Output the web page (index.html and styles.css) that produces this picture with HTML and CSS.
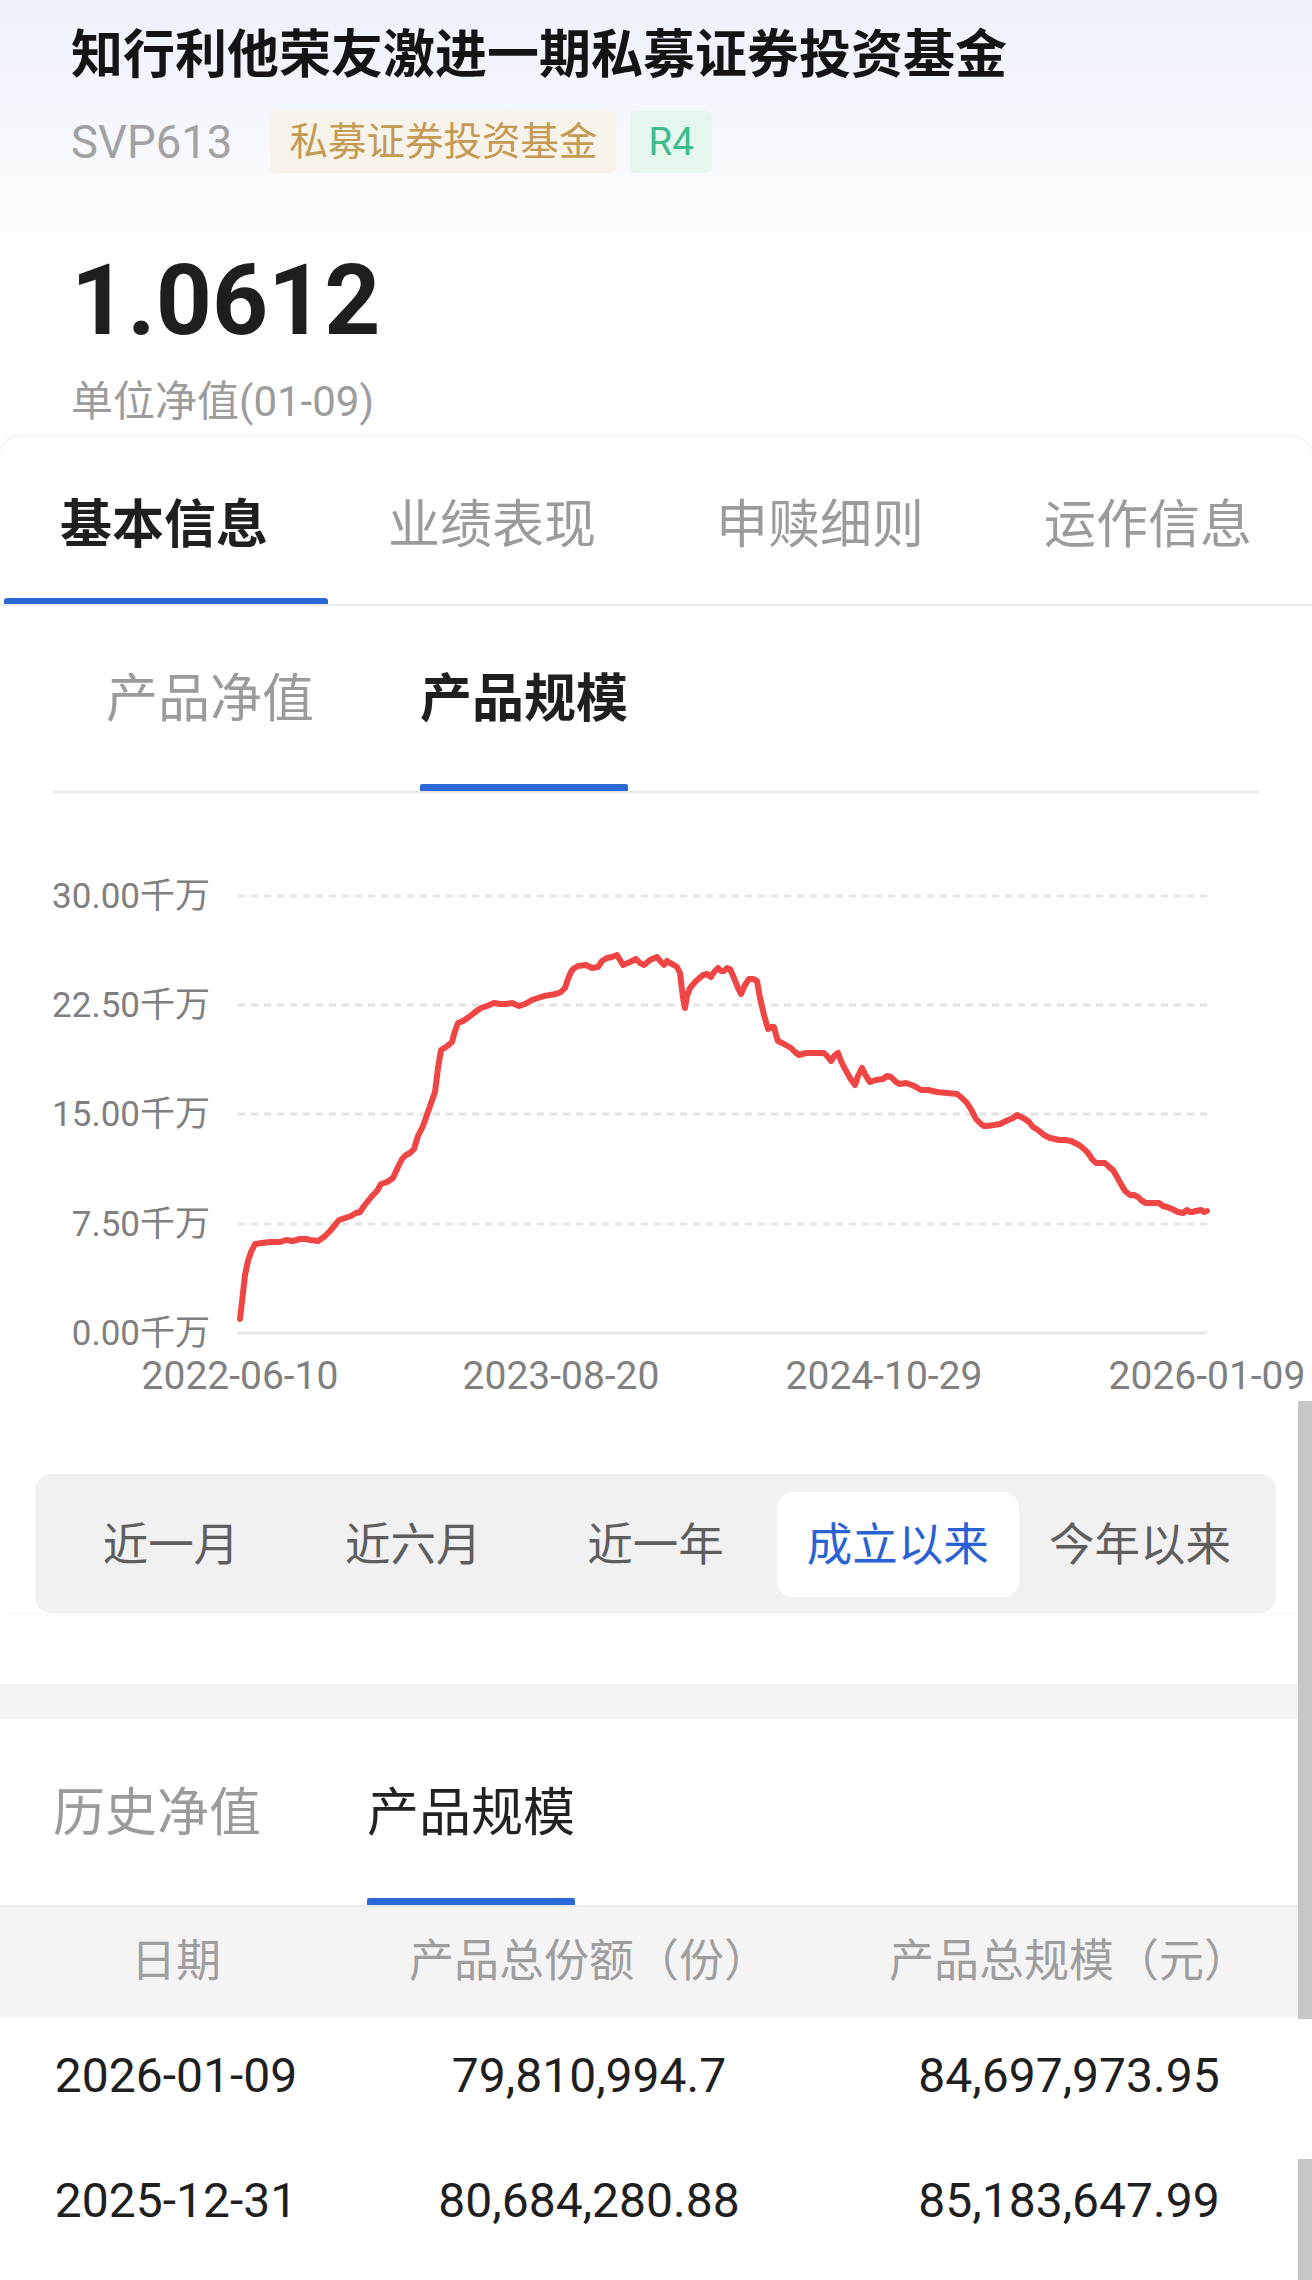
FILE: index.html
```html
<!DOCTYPE html>
<html lang="zh-CN">
<head>
    <meta charset="UTF-8">
    <meta name="viewport" content="width=device-width, initial-scale=1.0">
    <title>知行利他荣友激进一期私募证券投资基金</title>
    <link rel="stylesheet" href="styles.css">
</head>
<body>

    <header class="fund-head">
        <h1 class="fund-name">知行利他荣友激进一期私募证券投资基金</h1>
        <div class="fund-meta">
            <span class="fund-code">SVP613</span>
            <span class="tag tag-type">私募证券投资基金</span>
            <span class="tag tag-risk">R4</span>
        </div>
        <div class="nav-value">1.0612</div>
        <div class="nav-label">单位净值(01-09)</div>
    </header>

    <section class="panel">
        <nav class="main-tabs">
            <div class="main-tab active">基本信息</div>
            <div class="main-tab">业绩表现</div>
            <div class="main-tab">申赎细则</div>
            <div class="main-tab">运作信息</div>
        </nav>

        <div class="sub-tabs">
            <div class="sub-tab">产品净值</div>
            <div class="sub-tab active">产品规模</div>
        </div>

        <!-- scale chart -->
        <div class="chart">
            <svg width="1312" height="610">
                <g class="grid">
                    <line x1="238" y1="103" x2="1207" y2="103"/>
                    <line x1="238" y1="212" x2="1207" y2="212"/>
                    <line x1="238" y1="321" x2="1207" y2="321"/>
                    <line x1="238" y1="431" x2="1207" y2="431"/>
                </g>
                <line class="axis" x1="238" y1="540" x2="1207" y2="540"/>
                <g class="y-labels">
                    <text x="210" y="103">30.00千万</text>
                    <text x="210" y="212">22.50千万</text>
                    <text x="210" y="321">15.00千万</text>
                    <text x="210" y="431">7.50千万</text>
                    <text x="210" y="540">0.00千万</text>
                </g>
                <g class="x-labels">
                    <text x="240" y="583">2022-06-10</text>
                    <text x="561" y="583">2023-08-20</text>
                    <text x="884" y="583">2024-10-29</text>
                    <text x="1207" y="583">2026-01-09</text>
                </g>
                <polyline class="line" points="240,526 243,500 245,482 248,468 251,459 255,451 262,450 270,449 280,449 286,447 293,448 300,446 306,446 310,447 318,448 324,444 330,438 335,432 339,427 345,425 351,423 356,420 360,419 364,413 368,408 373,402 377,398 381,391 387,389 393,385 398,374 402,366 406,362 410,360 414,356 418,343 423,333 429,316 435,299 438,275 441,257 446,254 452,249 455,238 458,230 463,228 466,226 469,224 474,220 478,217 481,215 487,213 494,210 500,211 506,211 512,210 519,213 525,211 532,207 538,205 544,203 550,202 556,201 561,199 565,195 568,186 571,179 573,176 578,173 586,172 592,175 598,174 602,168 607,165 612,164 617,162 620,167 623,172 630,169 636,166 640,170 644,172 650,167 657,164 661,169 664,172 667,168 670,170 674,172 677,174 680,180 683,205 685,215 687,203 690,195 696,188 703,182 707,181 711,184 714,179 718,175 721,178 724,178 727,175 730,176 734,185 738,195 741,201 745,192 749,186 753,186 757,188 760,205 764,222 768,236 771,234 774,234 776,242 778,248 784,251 791,255 795,259 799,262 806,260 812,260 818,260 824,260 828,264 831,268 835,262 838,260 841,268 845,276 850,285 855,292 858,283 862,275 866,283 870,289 876,287 883,286 887,283 891,284 896,289 900,291 906,290 912,292 916,294 921,297 928,297 937,299 947,300 957,301 962,305 967,310 972,318 976,326 981,331 984,333 987,333 994,332 1000,331 1006,328 1013,325 1017,322 1021,324 1025,326 1029,329 1033,334 1038,337 1044,342 1050,345 1055,346 1059,347 1065,347 1071,348 1075,350 1079,352 1084,356 1088,360 1092,366 1096,370 1100,370 1105,370 1109,374 1113,377 1117,384 1121,391 1125,398 1130,402 1134,402 1138,404 1142,408 1146,410 1152,410 1159,410 1163,413 1167,414 1172,416 1178,419 1183,420 1187,417 1190,419 1192,419 1196,418 1201,417 1204,419 1207,418"/>
            </svg>
        </div>

        <div class="range">
            <div class="range-item">近一月</div>
            <div class="range-item">近六月</div>
            <div class="range-item">近一年</div>
            <div class="range-item active">成立以来</div>
            <div class="range-item">今年以来</div>
        </div>
    </section>

    <div class="band"></div>

    <section class="history">
        <div class="hist-tabs">
            <div class="hist-tab">历史净值</div>
            <div class="hist-tab active">产品规模</div>
        </div>

        <div class="table-head">
            <div>日期</div>
            <div>产品总份额（份）</div>
            <div>产品总规模（元）</div>
        </div>
        <div class="table-row">
            <div>2026-01-09</div>
            <div>79,810,994.7</div>
            <div>84,697,973.95</div>
        </div>
        <div class="table-row">
            <div>2025-12-31</div>
            <div>80,684,280.88</div>
            <div>85,183,647.99</div>
        </div>
    </section>

    <!-- scroll indicators drawn over the right edge -->
    <div class="thumb thumb-top"></div>
    <div class="thumb thumb-bottom"></div>

</body>
</html>
```

FILE: styles.css
```css
body {
    margin: 0;
    position: relative;
    width: 1312px;
    height: 2280px;
    overflow: hidden;
    background: #fff;
    font-family: Roboto, "Noto Sans CJK SC", sans-serif;
    color: #1f1f1f;
}

/* Header */
.fund-head {
    padding: 26px 0 11px 71px;
    background: linear-gradient(180deg, #edf1fa 0px, #f7f9fd 160px, #ffffff 300px);
}

.fund-name {
    margin: 0;
    font-size: 52px;
    line-height: 60px;
    font-weight: 700;
    color: #141414;
}

.fund-meta {
    display: flex;
    align-items: center;
    height: 62px;
    margin-top: 25px;
}

.fund-code {
    font-size: 45.5px;
    color: #a2a2a2;
    margin-right: 38px;
}

.tag {
    height: 62px;
    line-height: 62px;
    font-size: 38.5px;
    border-radius: 6px;
}

.tag-type {
    padding: 0 19px;
    background: #f8f3ea;
    color: #c49a55;
}

.tag-risk {
    margin-left: 14px;
    padding: 0 18px;
    background: #e5f6ef;
    color: #3dbd8c;
}

.nav-value {
    margin-top: 79px;
    font-size: 98px;
    line-height: 98px;
    font-weight: 700;
    color: #1e1e1e;
}

.nav-label {
    margin-top: 28px;
    font-size: 42px;
    line-height: 48px;
    color: #9c9c9c;
}

/* Panel with main tabs */
.panel {
    background: #fff;
    border-radius: 22px 22px 0 0;
    box-shadow: 0 -1px 8px rgba(0, 0, 0, 0.06);
}

.main-tabs {
    display: grid;
    grid-template-columns: repeat(4, 1fr);
    height: 167px;
    border-bottom: 2px solid #ebebeb;
}

.main-tab {
    position: relative;
    display: flex;
    align-items: center;
    justify-content: center;
    font-size: 52px;
    color: #9b9b9b;
}

.main-tab.active {
    color: #1f1f1f;
    font-weight: 700;
}

.main-tab.active::after {
    content: "";
    position: absolute;
    left: 4px;
    right: 0;
    bottom: 0;
    height: 6px;
    border-radius: 3px 3px 0 0;
    background: #2d68d8;
}

/* Sub tabs */
.sub-tabs {
    display: flex;
    height: 185px;
    margin: 0 53px;
    border-bottom: 2px solid #e8e8e8;
}

.sub-tab {
    position: relative;
    display: flex;
    align-items: center;
    padding: 0 53px 8px;
    font-size: 52px;
    color: #9b9b9b;
}

.sub-tab.active {
    color: #1f1f1f;
    font-weight: 700;
}

.sub-tab.active::after {
    content: "";
    position: absolute;
    left: 53px;
    right: 53px;
    bottom: 0;
    height: 7px;
    border-radius: 2px 2px 0 0;
    background: #2d68d8;
}

/* Chart */
.chart {
    height: 610px;
}

.chart svg {
    display: block;
}

.grid line {
    stroke: #e3e3e3;
    stroke-width: 3;
    stroke-dasharray: 7 6;
}

.axis {
    stroke: #e6e6e6;
    stroke-width: 3;
}

.y-labels text {
    font-size: 35px;
    fill: #808080;
    text-anchor: end;
    dominant-baseline: central;
}

.x-labels text {
    font-size: 39px;
    fill: #808080;
    text-anchor: middle;
    dominant-baseline: central;
}

.line {
    fill: none;
    stroke: #f04545;
    stroke-width: 6;
    stroke-linejoin: round;
    stroke-linecap: round;
}

/* Range selector */
.range {
    display: grid;
    grid-template-columns: repeat(5, 1fr);
    height: 105px;
    margin: 71px 36px 0 35px;
    padding: 18px 15px 16px;
    background: #f1f1f1;
    border-radius: 16px;
}

.range-item {
    display: flex;
    align-items: center;
    justify-content: center;
    padding-bottom: 7px;
    box-sizing: border-box;
    font-size: 45.5px;
    color: #5e5e5e;
    border-radius: 16px;
}

.range-item.active {
    background: #fff;
    color: #2a62d3;
}

.band {
    height: 35px;
    margin-top: 71px;
    background: #f4f4f4;
}

/* History table */
.hist-tabs {
    display: flex;
    height: 186px;
    border-bottom: 2px solid #ebebeb;
}

.hist-tab {
    position: relative;
    display: flex;
    align-items: center;
    padding: 0 53px 8px;
    font-size: 52px;
    color: #9b9b9b;
}

.hist-tab.active {
    color: #222;
}

.hist-tab.active::after {
    content: "";
    position: absolute;
    left: 53px;
    right: 53px;
    bottom: 0;
    height: 7px;
    border-radius: 2px 2px 0 0;
    background: #2d68d8;
}

.table-head,
.table-row {
    display: grid;
    grid-template-columns: 352px 474px 1fr;
    align-items: center;
    text-align: center;
    box-sizing: border-box;
}

.table-head {
    height: 110px;
    padding-bottom: 10px;
    background: #f4f4f4;
    font-size: 45px;
    color: #9e9e9e;
}

.table-row {
    height: 125px;
    padding-bottom: 8px;
    font-size: 48px;
    color: #1f1f1f;
}

/* Scroll indicators */
.thumb {
    position: absolute;
    right: 0;
    width: 14px;
    background: #c6c6c6;
}

.thumb-top {
    top: 1401px;
    height: 618px;
}

.thumb-bottom {
    top: 2159px;
    height: 121px;
}
```
